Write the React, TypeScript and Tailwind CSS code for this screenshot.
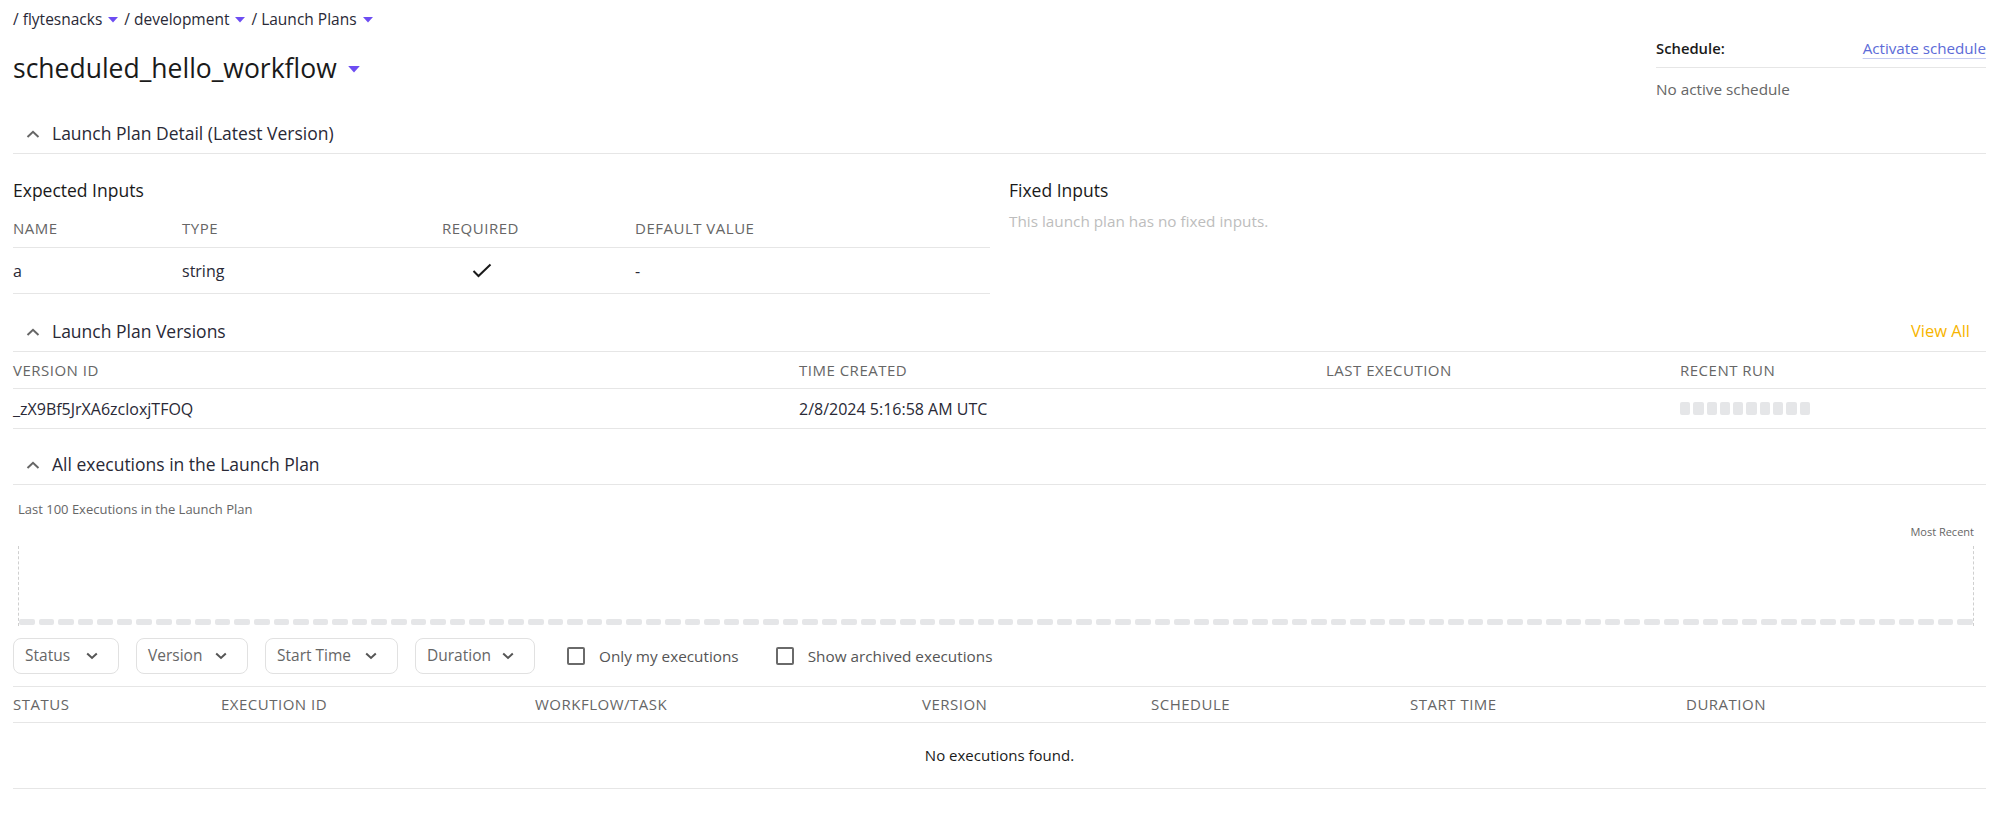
import React from "react";

const font = "font-['Open_Sans','Liberation_Sans',sans-serif]";

function Caret({ big }: { big?: boolean }) {
  return (
    <svg
      width={big ? 12 : 10}
      height={big ? 7 : 6}
      viewBox="0 0 10 6"
      className="inline-block ml-[6px]"
    >
      <path d="M0 0 L10 0 L5 5.5 Z" fill="#6d4df2" />
    </svg>
  );
}

function ChevronUp() {
  return (
    <svg width="14" height="8" viewBox="0 0 14 8" className="mr-[12px]">
      <polyline points="1.5,7 7,1.8 12.5,7" fill="none" stroke="#666" strokeWidth="2" />
    </svg>
  );
}

function ChevronDown() {
  return (
    <svg width="12" height="8" viewBox="0 0 12 8">
      <polyline points="1.2,1.5 6,6 10.8,1.5" fill="none" stroke="#555" strokeWidth="2" />
    </svg>
  );
}

function SectionHeader({ title, right }: { title: string; right?: React.ReactNode }) {
  return (
    <div className="flex items-center justify-between h-[40px] border-b border-[#e6e6e6] pl-[13px] pr-[16px]">
      <div className="flex items-center text-[17.5px] text-[#292936]">
        <ChevronUp />
        {title}
      </div>
      {right}
    </div>
  );
}

function FilterButton({ label, width }: { label: string; width: string }) {
  return (
    <div
      className={`flex items-center justify-between h-[36px] ${width} pl-[11px] pr-[20px] border border-[#e1e1e1] rounded-[8px] text-[15.5px] text-[#666]`}
    >
      <span>{label}</span>
      <ChevronDown />
    </div>
  );
}

function Checkbox({ label }: { label: string }) {
  return (
    <div className="flex items-center gap-[14px] text-[15.3px] text-[#555]">
      <div className="w-[18px] h-[18px] border-2 border-[#6a6a6a] rounded-[2px]" />
      <span>{label}</span>
    </div>
  );
}

const th = "text-[15px] tracking-[0.5px] text-[#666]";

export default function App() {
  const bars = Array.from({ length: 100 }, (_, i) => i);
  const recent = Array.from({ length: 10 }, (_, i) => i);
  return (
    <div className={`${font} bg-white w-[1999px] h-[816px] px-[13px] text-[#292936]`}>
      {/* top */}
      <div className="flex justify-between h-[114px]">
        <div>
          <div className="flex items-center h-[20px] mt-[10px] text-[15.5px] text-[#292936]">
            / flytesnacks <Caret /> <span className="ml-[6px]">/ development</span> <Caret />{" "}
            <span className="ml-[6px]">/ Launch Plans</span> <Caret />
          </div>
          <div className="flex items-center h-[36px] mt-[21px] text-[26.5px] text-[#1a1a1a]">
            scheduled_hello_workflow
            <span className="ml-[5px] flex items-center">
              <Caret big />
            </span>
          </div>
        </div>
        <div className="w-[330px] mt-[38px]">
          <div className="flex justify-between items-center h-[20px]">
            <span className="text-[14.8px] font-semibold text-[#1a1a1a]">Schedule:</span>
            <span className="text-[15.2px] text-[#5c6bd8] underline decoration-[#c5cbf0] underline-offset-4">
              Activate schedule
            </span>
          </div>
          <div className="border-b border-[#e6e6e6] mt-[9px]" />
          <div className="mt-[10px] text-[15.3px] text-[#666]">No active schedule</div>
        </div>
      </div>

      {/* Launch plan detail */}
      <SectionHeader title="Launch Plan Detail (Latest Version)" />
      <div className="grid grid-cols-2 gap-[19px]">
        <div>
          <div className="mt-[23px] h-[23px] text-[17.5px] text-[#1a1a1a]">Expected Inputs</div>
          <div className={`mt-[10px] flex items-center h-[38px] border-b border-[#e6e6e6] ${th}`}>
            <div className="w-[169px]">NAME</div>
            <div className="w-[260px]">TYPE</div>
            <div className="w-[193px]">REQUIRED</div>
            <div>DEFAULT VALUE</div>
          </div>
          <div className="flex items-center h-[46px] border-b border-[#e6e6e6] text-[16px] text-[#292936]">
            <div className="w-[169px]">a</div>
            <div className="w-[260px]">string</div>
            <div className="w-[193px] pl-[30px]">
              <svg width="20" height="15" viewBox="0 0 20 15">
                <polyline points="1.5,8 6.5,13 18.5,1.5" fill="none" stroke="#1a1a1a" strokeWidth="2" />
              </svg>
            </div>
            <div>-</div>
          </div>
        </div>
        <div>
          <div className="mt-[23px] h-[23px] text-[17.5px] text-[#1a1a1a]">Fixed Inputs</div>
          <div className="mt-[10px] text-[15.3px] text-[#bdbdbd]">This launch plan has no fixed inputs.</div>
        </div>
      </div>

      {/* versions */}
      <div className="mt-[18px]">
        <SectionHeader
          title="Launch Plan Versions"
          right={<span className="text-[16.5px] text-[#f7b500]">View All</span>}
        />
      </div>
      <div className={`flex items-center h-[37px] border-b border-[#e6e6e6] ${th}`}>
        <div className="w-[786px]">VERSION ID</div>
        <div className="w-[527px]">TIME CREATED</div>
        <div className="w-[354px]">LAST EXECUTION</div>
        <div>RECENT RUN</div>
      </div>
      <div className="flex items-center h-[40px] border-b border-[#e6e6e6] text-[16px] text-[#292936]">
        <div className="w-[786px]">_zX9Bf5JrXA6zcloxjTFOQ</div>
        <div className="w-[527px]">2/8/2024 5:16:58 AM UTC</div>
        <div className="w-[354px]"></div>
        <div className="flex gap-[3px]">
          {recent.map((i) => (
            <div key={i} className="w-[10.3px] h-[13px] rounded-[2px] bg-[#e5e6e8]" />
          ))}
        </div>
      </div>

      {/* executions */}
      <div className="mt-[16px]">
        <SectionHeader title="All executions in the Launch Plan" />
      </div>
      <div className="pl-[5px] pr-[12px]">
        <div className="mt-[15px] text-[13px] text-[#666] leading-[18px]">Last 100 Executions in the Launch Plan</div>
        <div className="text-right text-[11px] text-[#666] mt-[7px] leading-[14px]">Most Recent</div>
        <div className="mt-[7px] h-[80px] border-l border-r border-dashed border-[#cfcfcf] flex items-end">
          <div className="flex w-full gap-[4px] pb-[1px]">
            {bars.map((i) => (
              <div key={i} className="flex-1 h-[6px] rounded-[2px] bg-[#e5e6e8]" />
            ))}
          </div>
        </div>
      </div>
      <div className="flex items-center h-[61px] border-b border-[#e6e6e6] gap-[17px]">
        <FilterButton label="Status" width="w-[106px]" />
        <FilterButton label="Version" width="w-[112px]" />
        <FilterButton label="Start Time" width="w-[133px]" />
        <FilterButton label="Duration" width="w-[120px]" />
        <div className="ml-[15px]">
          <Checkbox label="Only my executions" />
        </div>
        <div className="ml-[20px]">
          <Checkbox label="Show archived executions" />
        </div>
      </div>
      <div className={`flex items-center h-[36px] border-b border-[#e6e6e6] ${th}`}>
        <div className="w-[208px]">STATUS</div>
        <div className="w-[314px]">EXECUTION ID</div>
        <div className="w-[387px]">WORKFLOW/TASK</div>
        <div className="w-[229px]">VERSION</div>
        <div className="w-[259px]">SCHEDULE</div>
        <div className="w-[276px]">START TIME</div>
        <div>DURATION</div>
      </div>
      <div className="flex items-center justify-center h-[66px] border-b border-[#e6e6e6] text-[15px] text-[#1a1a1a]">
        No executions found.
      </div>
    </div>
  );
}
